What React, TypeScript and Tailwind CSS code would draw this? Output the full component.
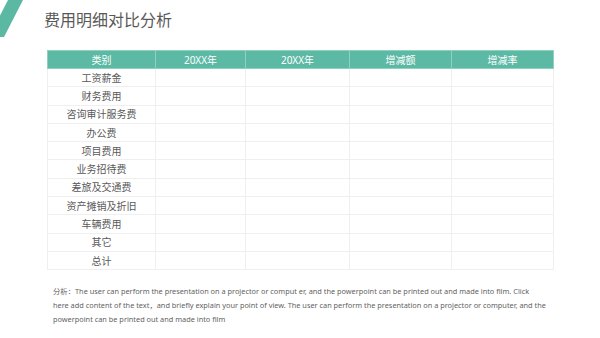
import React from "react";

const rows = [
  "工资薪金",
  "财务费用",
  "咨询审计服务费",
  "办公费",
  "项目费用",
  "业务招待费",
  "差旅及交通费",
  "资产摊销及折旧",
  "车辆费用",
  "其它",
  "总计",
];

const headers = ["类别", "20XX年", "20XX年", "增减额", "增减率"];
const widths = ["w-[108px]", "w-[90px]", "w-[104px]", "w-[102px]", "w-[102px]"];

export default function App() {
  return (
    <div
      className="relative w-[600px] h-[338px] overflow-hidden bg-white"
      style={{ fontFamily: '"Noto Sans", "Noto Sans CJK SC", sans-serif' }}
    >
      <svg className="absolute left-0 top-0" width="30" height="40" viewBox="0 0 30 40">
        <polygon points="8,0 23,0 4,37 -11,37" fill="#5bb8a3" />
      </svg>

      <h1 className="pl-[44px] pt-[9px] text-[16px] leading-[22px] font-normal text-[#595959]">
        费用明细对比分析
      </h1>

      <table className="ml-[47px] mt-[19px] border-collapse table-fixed w-[506px]">
        <thead>
          <tr className="h-[18px] bg-[#5cb9a4]">
            {headers.map((h, i) => (
              <th
                key={i}
                className={`${widths[i]} p-0 border border-[#8fd0c1] text-[10px] leading-none font-normal text-white text-center`}
              >
                {h}
              </th>
            ))}
          </tr>
        </thead>
        <tbody>
          {rows.map((r) => (
            <tr key={r} className="h-[18.3px]">
              <td className="p-0 border border-[#efefef] text-[10px] leading-none text-[#595959] text-center">
                {r}
              </td>
              <td className="p-0 border border-[#efefef]" />
              <td className="p-0 border border-[#efefef]" />
              <td className="p-0 border border-[#efefef]" />
              <td className="p-0 border border-[#efefef]" />
            </tr>
          ))}
        </tbody>
      </table>

      {/* 分析 note */}
      <div className="ml-[53px] mt-[14px] text-[7.35px] leading-[14px] text-[#5f5f5f] whitespace-nowrap">
        <div>
          分析：The user can perform the presentation on a projector or comput er, and the powerpoint can be printed out and made into film. Click
        </div>
        <div>
          here add content of the text，and briefly explain your point of view. The user can perform the presentation on a projector or computer, and the
        </div>
        <div>powerpoint can be printed out and made into film</div>
      </div>
    </div>
  );
}
